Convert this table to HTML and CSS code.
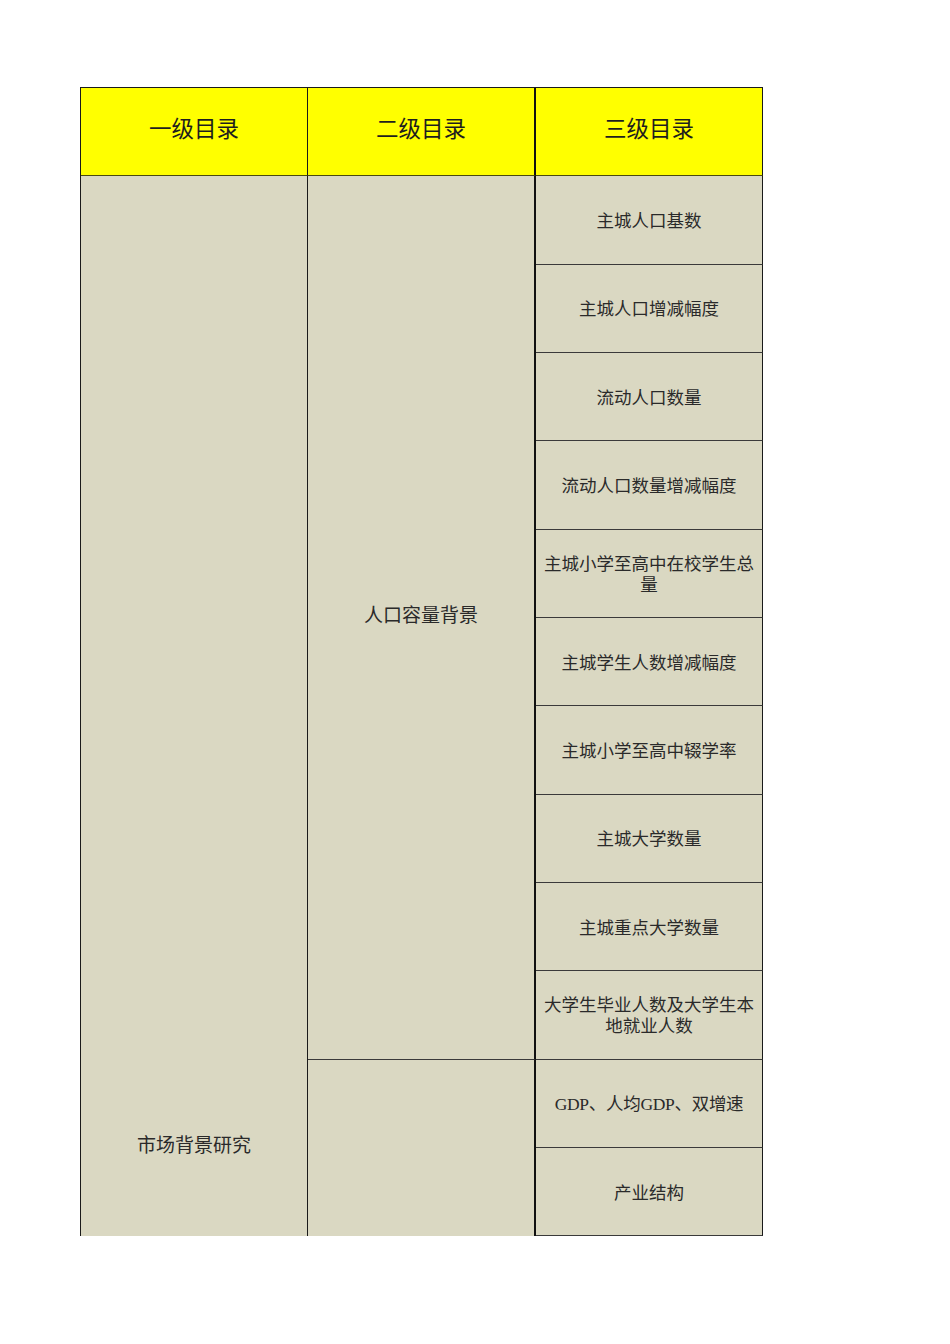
FILE: index.html
```html
<!DOCTYPE html>
<html lang="zh-CN">
<head>
<meta charset="utf-8">
<title>目录</title>
<link rel="stylesheet" href="styles.css">
</head>
<body>
<div class="page">
  <div class="clip">
    <div class="sheet">
      <div class="cell head c1">一级目录</div>
      <div class="cell head c2">二级目录</div>
      <div class="cell head c3">三级目录</div>

      <div class="cell c1 big span-l1">市场背景研究</div>
      <div class="cell c2 big span-l2a">人口容量背景</div>
      <div class="cell c3">主城人口基数</div>
      <div class="cell c3">主城人口增减幅度</div>
      <div class="cell c3">流动人口数量</div>
      <div class="cell c3">流动人口数量增减幅度</div>
      <div class="cell c3">主城小学至高中在校学生总量</div>
      <div class="cell c3">主城学生人数增减幅度</div>
      <div class="cell c3">主城小学至高中辍学率</div>
      <div class="cell c3">主城大学数量</div>
      <div class="cell c3">主城重点大学数量</div>
      <div class="cell c3">大学生毕业人数及大学生本地就业人数</div>
      <div class="cell c2 big span-l2b"></div>
      <div class="cell c3 narrow">GDP、人均GDP、双增速</div>
      <div class="cell c3">产业结构</div>
    </div>
  </div>
</div>
</body>
</html>
```

FILE: styles.css
```css
html, body {
  margin: 0;
  padding: 0;
  background: #ffffff;
}

.page {
  padding: 87px 0 0 80px;
}

.clip {
  width: 683px;
  height: 1149px;
  overflow: hidden;
}

.sheet {
  display: grid;
  grid-template-columns: 227px 228px 227px;
  grid-auto-rows: 88.33px;
  border-top: 1px solid #1a1a1a;
  border-left: 1px solid #1a1a1a;
  width: 683px;
  box-sizing: border-box;
  font-family: "Liberation Serif", "Noto Sans CJK SC", serif;
}

.cell {
  box-sizing: border-box;
  display: flex;
  align-items: center;
  justify-content: center;
  text-align: center;
  background: #dad8c2;
  color: #2a2a2a;
  font-size: 17.5px;
  line-height: 21px;
  padding: 3px 4px 0;
  border-right: 1px solid #1a1a1a;
  border-bottom: 1px solid #3a3a3a;
}

.c1 { grid-column: 1; }
.c2 { grid-column: 2; border-right: 2px solid #111111; }
.c3 { grid-column: 3; }

.big {
  font-size: 19px;
  padding: 0 4px 4px;
}

.narrow {
  letter-spacing: -0.3px;
}

.head {
  background: #ffff00;
  color: #1e1e1e;
  font-size: 22.5px;
  padding: 0 4px 5px;
  border-bottom: 1px solid #4a4a10;
}

.span-l1 {
  grid-row: 2 / span 22;
}

.span-l2a {
  grid-row: 2 / span 10;
}

.span-l2b {
  grid-row: 12 / span 10;
}
```
